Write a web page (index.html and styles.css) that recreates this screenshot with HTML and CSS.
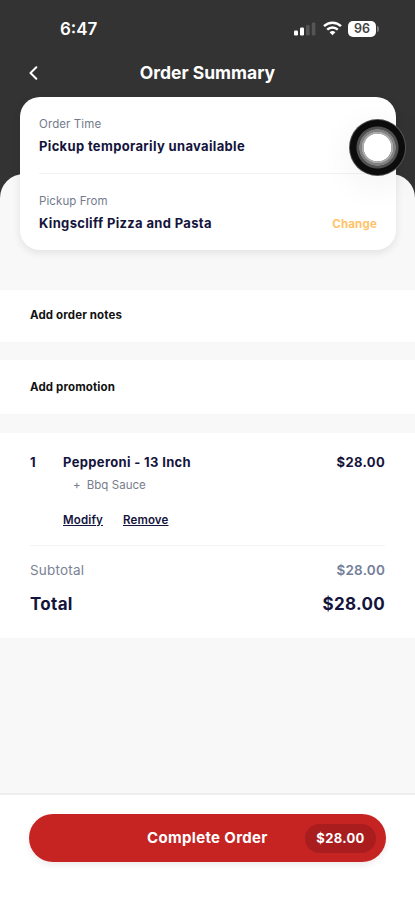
FILE: index.html
```html
<!DOCTYPE html>
<html lang="en">
<head>
<meta charset="utf-8">
<meta name="viewport" content="width=device-width, initial-scale=1">
<title>Order Summary</title>
<link rel="stylesheet" href="styles.css">
</head>
<body>
<div class="app">
  <header class="header">
    <div class="status">
      <span class="clock">6:47</span>
      <div class="status-icons">
        <svg class="signal" width="22" height="14" viewBox="0 0 22 14">
          <rect x="0" y="8.5" width="4" height="5" rx="1.3" fill="#fff"/>
          <rect x="6" y="5.5" width="4" height="8" rx="1.3" fill="#fff"/>
          <rect x="12" y="3" width="3.6" height="10.5" rx="1.2" fill="#555"/>
          <rect x="17.8" y="0.5" width="3.6" height="13" rx="1.2" fill="#555"/>
        </svg>
        <svg class="wifi" width="19" height="15" viewBox="0 0 19 15" fill="none" stroke="#fff" stroke-width="2.4">
          <path d="M1 5.2C5.8.6 13.2.6 18 5.2"/>
          <path d="M4.2 8.6c3-2.9 7.6-2.9 10.6 0"/>
          <path d="M9.5 14.3 6.6 11.2c1.7-1.500 4.100-1.500 5.800 0z" fill="#fff" stroke="none"/>
        </svg>
        <div class="battery"><span>96</span></div>
      </div>
    </div>
    <div class="titlebar">
      <svg class="back" width="10" height="14" viewBox="0 0 10 14" fill="none" stroke="#fff" stroke-width="2" stroke-linecap="round" stroke-linejoin="round"><path d="M8.300 1.300 2.500 7l5.800 5.700"/></svg>
      <h1>Order Summary</h1>
    </div>
  </header>
  <main class="sheet">
    <section class="card">
      <div class="info">
        <span class="label">Order Time</span>
        <strong>Pickup temporarily unavailable</strong>
      </div>
      <div class="info info-from">
        <span class="label">Pickup From</span>
        <div class="split"><strong>Kingscliff Pizza and Pasta</strong><a class="change">Change</a></div>
      </div>
      <div class="touch"></div>
    </section>
    <section class="row notes">Add order notes</section>
    <section class="row promo">Add promotion</section>
    <section class="order">
      <div class="item">
        <span class="qty">1</span>
        <span class="name">Pepperoni - 13 Inch</span>
        <span class="price">$28.00</span>
      </div>
      <div class="extra"><span class="plus">+</span><span>Bbq Sauce</span></div>
      <div class="actions"><a>Modify</a><a>Remove</a></div>
      <div class="subtotal"><span>Subtotal</span><b>$28.00</b></div>
      <div class="total"><span>Total</span><span class="sum">$28.00</span></div>
    </section>
  </main>
  <footer class="footer">
    <button class="complete"><span class="cta">Complete Order</span><span class="pill">$28.00</span></button>
  </footer>
</div>
</body>
</html>
```

FILE: styles.css
```css
* { box-sizing: border-box; }
body { margin: 0; font-family: Inter, "Liberation Sans", sans-serif; background: #333; color: #14143c; }
.app { width: 415px; height: 900px; display: flex; flex-direction: column; overflow: hidden; }
.header { height: 174px; flex: none; color: #fff; }
.status { height: 58px; padding: 0 37px 0 60px; display: flex; align-items: center; justify-content: space-between; }
.clock { font-size: 17px; font-weight: 600; line-height: 20px; }
.status-icons { display: flex; align-items: center; gap: 7px; }
.wifi { margin-top: -1px; }
.battery { position: relative; width: 28px; height: 16px; margin: -1px 2px 0 -1px; border-radius: 5px; background: #fff; color: #444; font-size: 12.5px; font-weight: 600; line-height: 16px; text-align: center; }
.battery::after { content: ""; position: absolute; right: -3px; top: 5px; width: 2px; height: 6px; border-radius: 0 2px 2px 0; background: #777; }
.titlebar { height: 30px; display: grid; grid-template-columns: 60px 1fr 60px; align-items: center; }
.back { margin-left: 28px; }
h1 { margin: 0; font-size: 17.5px; font-weight: 700; line-height: 24px; text-align: center; white-space: nowrap; }
.sheet { flex: 1; background: #f8f8f8; border-radius: 24px 24px 0 0; }
.card { position: relative; height: 153px; margin: -77px 19px 40px 20px; padding: 0 19px; border-radius: 20px; background: #fff; box-shadow: 0 3px 8px rgba(0, 0, 0, .09); }
.info { height: 76px; padding-top: 19px; }
.info-from { height: 77px; border-top: 1px solid #f2f2f2; }
.label { display: block; color: #737b8d; font-size: 11.5px; line-height: 16px; letter-spacing: .1px; }
.info strong { display: block; margin-top: 5px; font-size: 13px; line-height: 18px; letter-spacing: .34px; white-space: nowrap; }
.split { display: flex; justify-content: space-between; align-items: center; }
.change { margin-top: 7px; color: #ffc267; font-size: 11.5px; font-weight: 700; line-height: 16px; letter-spacing: .2px; }
.touch { position: absolute; right: -10px; top: 22px; width: 57px; height: 57px; border-radius: 50%; background: radial-gradient(circle, #fff 0 13.5px, #aaa 14px 15.5px, #808080 16px 18px, #505050 18.5px 20.5px, #0c0c0c 21.5px 27px, #555 28px); box-shadow: 0 8px 28px 8px rgba(0, 0, 0, .035); }
.row { background: #fff; padding-left: 30px; color: #111; font-size: 11.5px; font-weight: 700; letter-spacing: .13px; }
.notes { height: 52px; line-height: 50px; }
.promo { height: 54px; margin-top: 18px; line-height: 54px; }
.order { height: 205px; margin-top: 19px; padding: 19px 30px 0; background: #fff; }
.item { display: grid; grid-template-columns: 33px 1fr auto; font-size: 13px; font-weight: 700; line-height: 20px; letter-spacing: .34px; }
.extra { display: flex; gap: 6px; padding: 5px 0 0 43px; color: #777d8b; font-size: 11.5px; line-height: 16px; letter-spacing: .05px; }
.actions { display: flex; gap: 20px; height: 53px; padding: 19px 0 0 33px; border-bottom: 1px solid #f3f3f3; font-size: 11.5px; font-weight: 600; line-height: 16px; letter-spacing: .15px; }
.actions a { text-decoration: underline; }
.subtotal, .total { display: flex; justify-content: space-between; }
.subtotal { padding-top: 14px; color: #7b8295; font-size: 13.5px; line-height: 20px; letter-spacing: .2px; }
.subtotal b { font-weight: 600; color: #737e9a; }
.total { padding-top: 13px; font-size: 17px; font-weight: 700; line-height: 22px; letter-spacing: .3px; }
.footer { flex: none; height: 107px; padding: 19px 29px; background: #fff; border-top: 2px solid #eee; }
.complete { width: 357px; height: 48px; padding: 0 10px 0 118px; border: 0; border-radius: 24px; background: #c62323; box-shadow: 0 3px 6px rgba(0, 0, 0, .08); display: flex; align-items: center; justify-content: space-between; color: #fff; font: 700 15px/20px Inter, sans-serif; letter-spacing: .33px; white-space: nowrap; }
.pill { width: 71px; height: 29px; border-radius: 15px; background: #aa1d1f; font-size: 13px; line-height: 29px; text-align: center; }
```
